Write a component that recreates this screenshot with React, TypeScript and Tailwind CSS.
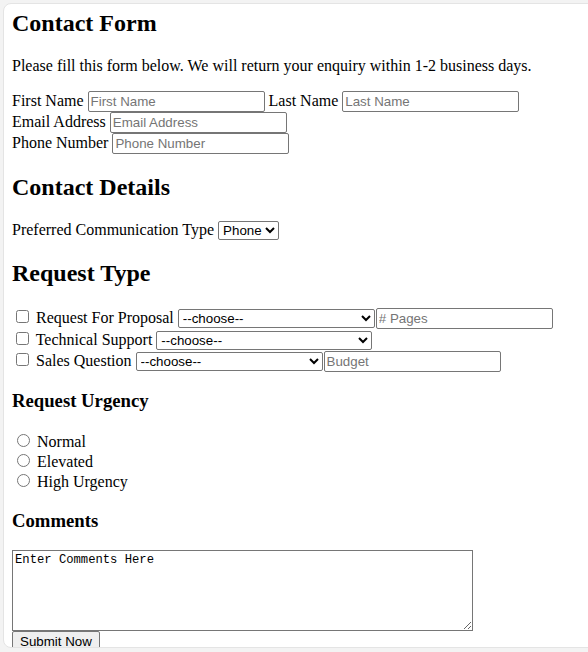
import React from 'react';

const INPUT =
  "h-[21px] w-[177px] rounded-[2px] border border-[#767676] bg-white px-[2px] py-[1px] align-baseline font-['Liberation_Sans',Arial,sans-serif] text-[13.333px] text-black placeholder:text-[#757575]";

const SELECT =
  "h-[19px] rounded-[2px] border border-[#767676] bg-white font-['Liberation_Sans',Arial,sans-serif] text-[13.333px] text-black";

export default function App() {
  return (
    <div className="h-[652px] w-[588px] overflow-hidden bg-[#f3f3f3] pl-[3px] pt-[3px] font-['Liberation_Serif','Times_New_Roman',serif] text-[16px] leading-[normal] text-black">
      <div className="h-[645px] w-[620px] overflow-hidden rounded-l-lg border border-[#e4e4e4] bg-white px-2 pt-[6px]">
        <form onSubmit={(e) => e.preventDefault()}>
          <h1 className="mb-[19.92px] text-[24px] font-bold">Contact Form</h1>
          <p className="my-4">
            Please fill this form below. We will return your enquiry within 1-2 business days.
          </p>

          <div>
            First Name <input className={INPUT} placeholder="First Name" /> Last Name{' '}
            <input className={INPUT} placeholder="Last Name" />
            <br />
            Email Address <input className={INPUT} placeholder="Email Address" />
            <br />
            Phone Number <input className={INPUT} placeholder="Phone Number" />
          </div>

          <h2 className="my-[19.92px] text-[24px] font-bold">Contact Details</h2>
          <p className="my-4">
            Preferred Communication Type{' '}
            <select className={`${SELECT} w-[61px]`} defaultValue="phone">
              <option value="phone">Phone</option>
              <option value="email">Email</option>
            </select>
          </p>

          <h2 className="my-[19.92px] text-[24px] font-bold">Request Type</h2>
          <div>
            <input type="checkbox" className="m-[3px_3px_3px_4px]" /> Request For Proposal{' '}
            <select className={`${SELECT} w-[197px]`}>
              <option>--choose--</option>
            </select>
            <input className={`${INPUT} ml-px h-[20px] w-[176px]`} placeholder="# Pages" />
            <br />
            <input type="checkbox" className="m-[3px_3px_3px_4px]" /> Technical Support{' '}
            <select className={`${SELECT} w-[216px]`}>
              <option>--choose--</option>
            </select>
            <br />
            <input type="checkbox" className="m-[3px_3px_3px_4px]" /> Sales Question{' '}
            <select className={`${SELECT} w-[187px]`}>
              <option>--choose--</option>
            </select>
            <input className={`${INPUT} ml-px h-[20px] w-[176px]`} placeholder="Budget" />
          </div>

          <h3 className="my-[18.72px] text-[18.72px] font-bold">Request Urgency</h3>
          <div>
            <input type="radio" name="urgency" className="m-[3px_3px_0_5px]" /> Normal
            <br />
            <input type="radio" name="urgency" className="m-[3px_3px_0_5px]" /> Elevated
            <br />
            <input type="radio" name="urgency" className="m-[3px_3px_0_5px]" /> High Urgency
          </div>

          <h3 className="my-[18.72px] text-[18.72px] font-bold">Comments</h3>
          <textarea
            className="block h-[81px] w-[461px] border border-[#767676] bg-white p-[2px] font-['Liberation_Mono',monospace] text-[12.2px] text-black"
            defaultValue="Enter Comments Here"
          />
          <button
            type="submit"
            className="h-[21px] rounded-[2px] border border-[#767676] bg-[#efefef] px-[7px] py-[1px] font-['Liberation_Sans',Arial,sans-serif] text-[13.333px] text-black"
          >
            Submit Now
          </button>
        </form>
      </div>
    </div>
  );
}
